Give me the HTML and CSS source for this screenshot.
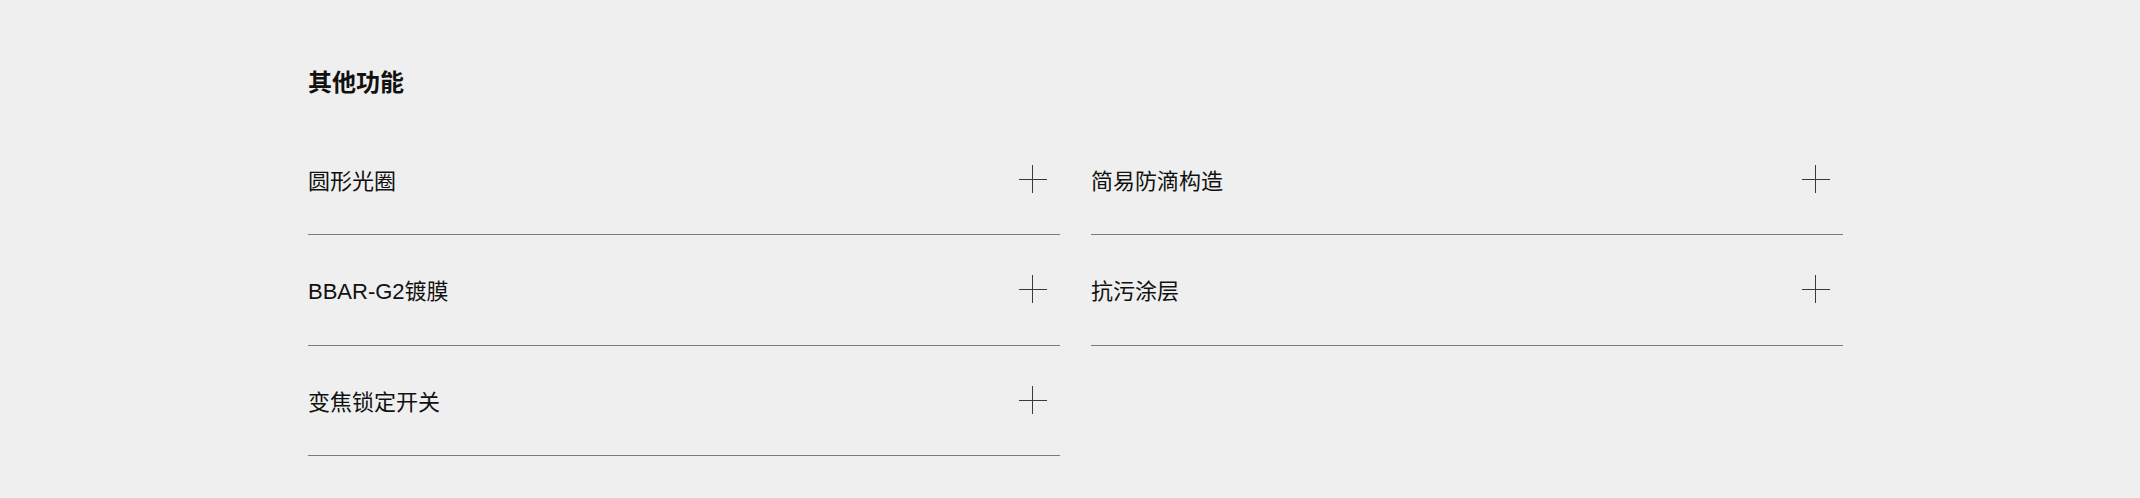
FILE: index.html
```html
<!DOCTYPE html>
<html lang="zh-CN">
<head>
<meta charset="utf-8">
<title>其他功能</title>
<link rel="stylesheet" href="styles.css">
</head>
<body>
<section class="features">
  <h2 class="features-title">其他功能</h2>
  <div class="features-grid">
    <div class="feature-row"><span class="feature-name">圆形光圈</span><span class="plus"></span></div>
    <div class="feature-row"><span class="feature-name">简易防滴构造</span><span class="plus"></span></div>
    <div class="feature-row"><span class="feature-name">BBAR-G2镀膜</span><span class="plus"></span></div>
    <div class="feature-row"><span class="feature-name">抗污涂层</span><span class="plus"></span></div>
    <div class="feature-row"><span class="feature-name">变焦锁定开关</span><span class="plus"></span></div>
  </div>
</section>
</body>
</html>
```
FILE: styles.css
```css
html, body {
  margin: 0;
  padding: 0;
  background: #efefef;
}
body {
  width: 2140px;
  height: 498px;
  overflow: hidden;
  font-family: "Liberation Sans", "Noto Sans CJK SC", sans-serif;
  color: #111;
}
.features {
  padding: 66.5px 0 0 308px;
  width: 1535px;
}
.features-title {
  margin: 0 0 26px;
  font-size: 24px;
  line-height: 32px;
  font-weight: 700;
  color: #111;
}
.features-grid {
  display: grid;
  grid-template-columns: 752px 752px;
  column-gap: 31px;
}
.feature-row {
  display: flex;
  align-items: center;
  justify-content: space-between;
  padding: 41px 13px 36.5px 0;
  border-bottom: 1px solid #7c7c7c;
}
.feature-name {
  font-size: 22px;
  line-height: 32px;
}
.plus {
  position: relative;
  width: 28px;
  height: 28px;
  margin-top: -6px;
}
.plus::before,
.plus::after {
  content: "";
  position: absolute;
  background: #3a3a3a;
}
.plus::before {
  left: 0;
  top: 14px;
  width: 28px;
  height: 1px;
}
.plus::after {
  left: 13px;
  top: 0;
  width: 1px;
  height: 28px;
}
```
